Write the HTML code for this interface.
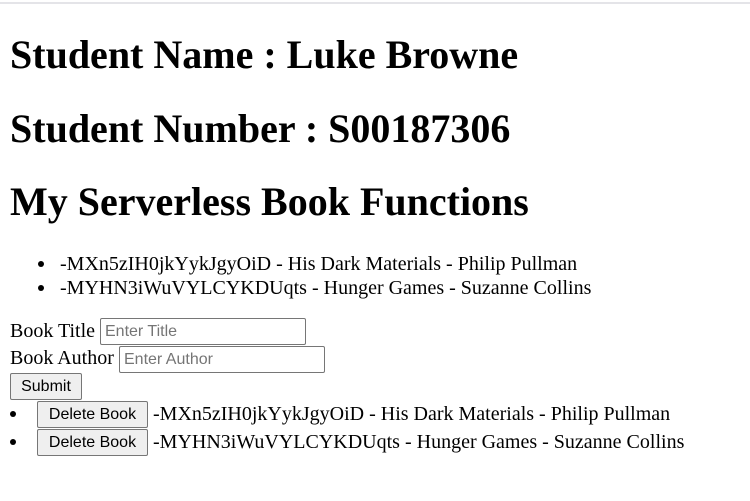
<!DOCTYPE html>
<html><head><style>
body{margin:0;width:750px;height:501px;background:#fff;position:relative;overflow:hidden;font-family:"Liberation Serif",serif;color:#000}
.bar{position:absolute;left:0;top:2px;width:750px;height:2px;background:#e4e4e8}
.a{position:absolute;white-space:nowrap}
h1{margin:0;font-size:40px;font-weight:bold;line-height:44px}
.t{font-size:20px;line-height:24px}
input{position:absolute;font-family:"Liberation Sans",sans-serif;font-size:16px;border:1px solid #767676;border-radius:2px;padding:1px 4px;box-sizing:border-box;height:27px}
input::placeholder{color:#757575}
button{position:absolute;font-family:"Liberation Sans",sans-serif;font-size:16px;background:#efefef;border:1px solid #767676;border-radius:2px;height:27px;padding:0;color:#000}
.dot{position:absolute;width:6px;height:6px;border-radius:50%;background:#000}
</style></head><body>
<div class="bar"></div>
<h1 class="a" style="left:10px;top:33px">Student Name : Luke Browne</h1>
<h1 class="a" style="left:10px;top:107px">Student Number : S00187306</h1>
<h1 class="a" style="left:10px;top:180px">My Serverless Book Functions</h1>
<div class="dot" style="left:38px;top:261px"></div>
<div class="a t" style="left:60px;top:252px">-MXn5zIH0jkYykJgyOiD - His Dark Materials - Philip Pullman</div>
<div class="dot" style="left:38px;top:285px"></div>
<div class="a t" style="left:60px;top:276px">-MYHN3iWuVYLCYKDUqts - Hunger Games - Suzanne Collins</div>
<div class="a t" style="left:10px;top:319px">Book Title</div>
<input style="left:100px;top:318px;width:206px" placeholder="Enter Title">
<div class="a t" style="left:10px;top:346px">Book Author</div>
<input style="left:119px;top:346px;width:206px" placeholder="Enter Author">
<button style="left:10px;top:373px;width:72px">Submit</button>
<div class="dot" style="left:10px;top:411px"></div>
<button style="left:37px;top:401px;width:111px">Delete Book</button>
<div class="a t" style="left:153px;top:402px">-MXn5zIH0jkYykJgyOiD - His Dark Materials - Philip Pullman</div>
<div class="dot" style="left:10px;top:439px"></div>
<button style="left:37px;top:429px;width:111px">Delete Book</button>
<div class="a t" style="left:153px;top:430px">-MYHN3iWuVYLCYKDUqts - Hunger Games - Suzanne Collins</div>
</body></html>
